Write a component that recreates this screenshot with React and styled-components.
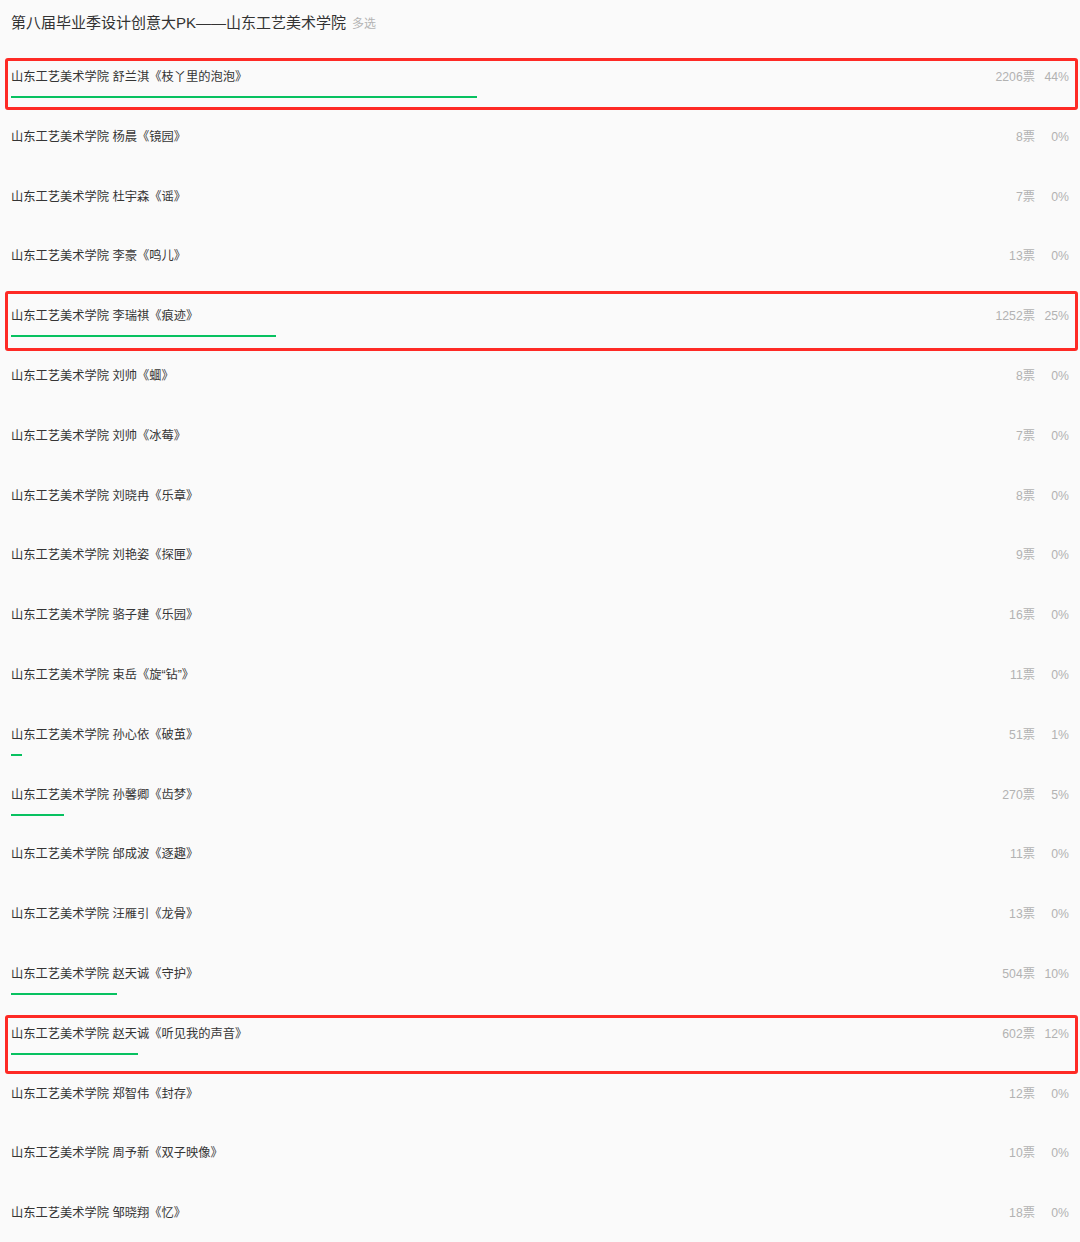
import React from 'react';
import styled, { createGlobalStyle } from 'styled-components';

// STYLES

const GlobalStyle = createGlobalStyle`
  html, body {
    margin: 0;
    padding: 0;
    background: #fafafa;
  }
  body {
    font-family: 'Liberation Sans', 'Noto Sans CJK SC', sans-serif;
  }
`;

const Page = styled.div`
  padding: 0 11px;
  width: 1080px;
  box-sizing: border-box;
`;

const Title = styled.div`
  display: flex;
  align-items: baseline;
  gap: 6px;
  padding: 13px 0 20px;
  height: 20px;
  line-height: 20px;
`;
const TitleText = styled.span`
  font-size: 15px;
  color: #333;
`;
const TitleTag = styled.span`
  font-size: 12px;
  color: #b4b4b4;
`;

const Row = styled.div`
  position: relative;
  height: 59.8px;
  padding-top: 15px;
  box-sizing: border-box;
`;
const RowLine = styled.div`
  display: flex;
  align-items: center;
  height: 18px;
  line-height: 18px;
  font-size: 12.25px;
`;
const Name = styled.span`
  flex: 1;
  color: #353535;
  white-space: nowrap;
`;
const Votes = styled.span`
  color: #b2b2b2;
  text-align: right;
`;
const Pct = styled.span`
  width: 30px;
  margin-left: 4px;
  color: #b2b2b2;
  text-align: right;
`;
const Bar = styled.div`
  height: 2px;
  margin-top: 10px;
  background: #07c160;
  width: ${p => p.$pct}%;
`;
// red annotation frame drawn over a row
const Frame = styled.div`
  position: absolute;
  left: -6px;
  right: -9px;
  top: ${p => p.$top}px;
  height: ${p => p.$height}px;
  border: 3px solid #fe2a25;
  border-radius: 3px;
  box-sizing: border-box;
  pointer-events: none;
`;

const school = '山东工艺美术学院';

const items = [
  { name: '舒兰淇《枝丫里的泡泡》', votes: 2206, pct: 44, frame: [5, 52] },
  { name: '杨晨《镜园》', votes: 8, pct: 0 },
  { name: '杜宇森《谣》', votes: 7, pct: 0 },
  { name: '李豪《鸣儿》', votes: 13, pct: 0 },
  { name: '李瑞祺《痕迹》', votes: 1252, pct: 25, frame: [-1, 60] },
  { name: '刘帅《蜖》', votes: 8, pct: 0 },
  { name: '刘帅《冰莓》', votes: 7, pct: 0 },
  { name: '刘晓冉《乐章》', votes: 8, pct: 0 },
  { name: '刘艳姿《探匣》', votes: 9, pct: 0 },
  { name: '骆子建《乐园》', votes: 16, pct: 0 },
  { name: '束岳《旋“钻”》', votes: 11, pct: 0 },
  { name: '孙心依《破茧》', votes: 51, pct: 1 },
  { name: '孙馨卿《齿梦》', votes: 270, pct: 5 },
  { name: '邰成波《逐趣》', votes: 11, pct: 0 },
  { name: '汪雁引《龙骨》', votes: 13, pct: 0 },
  { name: '赵天诚《守护》', votes: 504, pct: 10 },
  { name: '赵天诚《听见我的声音》', votes: 602, pct: 12, frame: [5, 59] },
  { name: '郑智伟《封存》', votes: 12, pct: 0 },
  { name: '周予新《双子映像》', votes: 10, pct: 0 },
  { name: '邹晓翔《忆》', votes: 18, pct: 0 },
];

export default function App() {
  return (
    <Page>
      <GlobalStyle />
      <Title>
        <TitleText>第八届毕业季设计创意大PK——山东工艺美术学院</TitleText>
        <TitleTag>多选</TitleTag>
      </Title>
      {items.map(item => (
        <Row key={item.name}>
          <RowLine>
            <Name>
              {school} {item.name}
            </Name>
            <Votes>{item.votes}票</Votes>
            <Pct>{item.pct}%</Pct>
          </RowLine>
          {item.pct > 0 && <Bar $pct={item.pct} />}
          {item.frame && <Frame $top={item.frame[0]} $height={item.frame[1]} />}
        </Row>
      ))}
    </Page>
  );
}
